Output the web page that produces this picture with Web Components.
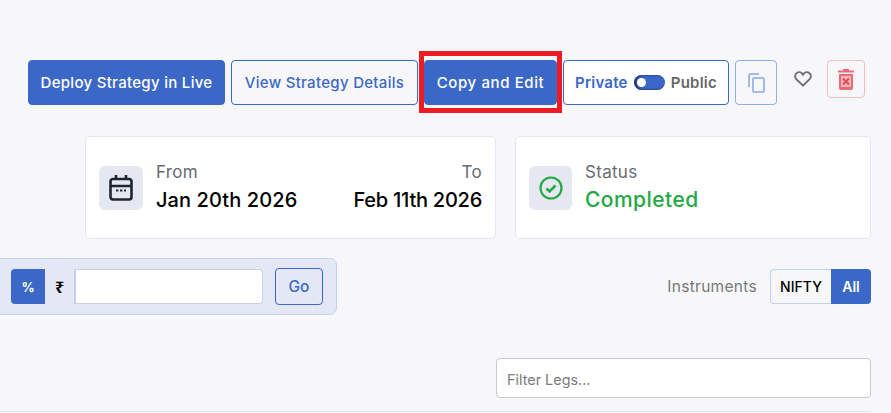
<!DOCTYPE html>
<html>
  <head>
    <meta charset="utf-8" />
    <title>Strategy</title>
    <style>
      html, body { margin: 0; height: 100%; overflow: hidden; }
      body {
        background: #f7f7fa;
        font-family: "Inter", "Noto Sans", sans-serif;
        color: #000;
      }
      strategy-page { width: 891px; height: 413px; }
    </style>

    <template id="strategy-page">
      <style>
        :host { display: block; box-sizing: border-box; padding-top: 60px; position: relative; overflow: hidden; }
        .actions { display: flex; padding-left: 28px; align-items: flex-start; }
        .cards { display: flex; gap: 19px; margin: 31px 20px 0 85px; }
        .tools { display: flex; justify-content: space-between; align-items: flex-start; margin: 19px 20px 0 -21px; }
        .legs { display: flex; justify-content: flex-end; margin: 43px 20px 0 0; }
        hr { border: 0; border-top: 1px solid #dfe3f0; margin: 13px 20px 0 0; }
      </style>
      <div class="actions"><slot name="actions"></slot></div>
      <div class="cards"><slot name="cards"></slot></div>
      <div class="tools"><slot name="tools"></slot></div>
      <div class="legs"><slot name="legs"></slot></div>
      <hr />
    </template>

    <template id="ui-button">
      <style>
        :host { display: block; position: relative; }
        button {
          box-sizing: border-box;
          display: block;
          height: 45px;
          width: var(--w);
          border: 1px solid #3b68c6;
          border-radius: 4px;
          background: #fff0;
          color: #3b68c6;
          font: 500 15px "Inter", "Noto Sans", sans-serif;
          letter-spacing: var(--track, 0.3px);
          padding: 0;
        }
        :host([solid]) button { background: #3b68c6; color: #fff; }
        .mark { display: none; position: absolute; inset: -9px -5px -8px -5px; border: 5px solid #ed1c24; }
        :host([marked]) .mark { display: block; }
      </style>
      <button><slot></slot></button>
      <div class="mark"></div>
    </template>

    <template id="privacy-toggle">
      <style>
        :host {
          display: flex;
          box-sizing: border-box;
          align-items: center;
          justify-content: center;
          gap: 6px;
          width: 166px;
          height: 45px;
          margin-left: 6px;
          border: 1px solid #3b68c6;
          border-radius: 4px;
          background: #fff;
          font-size: 15px;
          font-weight: 600;
          letter-spacing: 0.25px;
        }
        .on { color: #3b68c6; }
        .off { color: #666; }
        .track { width: 31px; height: 15px; border-radius: 8px; background: #3b68c6; position: relative; box-shadow: inset 2px 0 3px #1d2f66; }
        .knob { position: absolute; left: 3px; top: 3px; width: 9px; height: 9px; border-radius: 50%; background: #fff; }
      </style>
      <span class="on">Private</span>
      <span class="track"><span class="knob"></span></span>
      <span class="off">Public</span>
    </template>

    <template id="icon-button">
      <style>
        :host {
          display: flex;
          box-sizing: border-box;
          align-items: center;
          justify-content: center;
          width: var(--w, 42px);
          height: var(--h, 45px);
          margin-left: var(--ml, 6px);
          border: 1px solid var(--line, transparent);
          border-radius: 4px;
        }
      </style>
      <slot></slot>
    </template>

    <template id="info-card">
      <style>
        :host {
          display: flex;
          box-sizing: border-box;
          flex: 0 0 var(--w);
          height: 103px;
          align-items: center;
          gap: 13px;
          padding: 0 13px;
          background: #fff;
          border: 1px solid #e3e6f0;
          border-radius: 5px;
        }
        .tile { flex: none; width: var(--tile, 44px); height: 44px; border-radius: 6px; background: #e5e8f0; display: flex; align-items: center; justify-content: center; }
        .body { flex: 1; }
      </style>
      <div class="tile"><slot name="icon"></slot></div>
      <div class="body"><slot></slot></div>
    </template>

    <template id="date-cell">
      <style>
        :host { display: block; }
        :host([end]) { text-align: right; }
        .label { color: #666b75; font-size: 17px; line-height: 24px; letter-spacing: 0.3px; }
        .value { font-size: 20px; line-height: 30px; font-weight: 500; margin-top: 1px; letter-spacing: var(--track, 0.1px); }
        :host([ok]) .value { color: #23a843; font-size: 21px; letter-spacing: 0.45px; }
      </style>
      <div class="label"><slot name="label"></slot></div>
      <div class="value"><slot></slot></div>
    </template>

    <template id="amount-filter">
      <style>
        :host {
          display: flex;
          box-sizing: border-box;
          align-items: center;
          width: 358px;
          height: 57px;
          padding-left: 31px;
          background: #e4e8f4;
          border: 1px solid #c1d2ee;
          border-radius: 7px;
          font-family: "Inter", "Noto Sans", sans-serif;
        }
        .pct, .inr { height: 35px; box-sizing: border-box; display: flex; align-items: center; justify-content: center; font-size: 13px; font-weight: 700; }
        .pct { width: 34px; background: #3b68c6; color: #fff; border-radius: 4px 0 0 4px; }
        .inr { width: 31px; border-right: 2px solid #c3d0e8; font-family: "Noto Sans", sans-serif; font-size: 16px; }
        input { box-sizing: border-box; width: 187px; height: 35px; border: 1px solid #c9cfdb; border-left: 0; border-radius: 0 4px 4px 0; background: #fff; padding: 0; }
        button { box-sizing: border-box; width: 48px; height: 37px; margin-left: 12px; background: transparent; border: 1px solid #3b68c6; border-radius: 4px; color: #3b68c6; font: 500 15.5px "Inter", sans-serif; padding: 0; }
      </style>
      <span class="pct">%</span><span class="inr">₹</span><input aria-label="Amount" /><button>Go</button>
    </template>

    <template id="instrument-filter">
      <style>
        :host { display: flex; align-items: center; margin-top: 11px; font-size: 14.4px; }
        .label { color: #777; margin-right: 13px; font-size: 15.5px; letter-spacing: 0.3px; }
        .pill { box-sizing: border-box; height: 35px; display: flex; align-items: center; justify-content: center; font-weight: 500; font-size: 14px; }
        .a { width: 61px; border: 1px solid #c3d0ee; border-right: 0; border-radius: 4px 0 0 4px; }
        .b { width: 40px; background: #3b68c6; color: #fff; border-radius: 0 4px 4px 0; font-weight: 600; }
      </style>
      <span class="label">Instruments</span>
      <span class="pill a">NIFTY</span><span class="pill b">All</span>
    </template>

    <template id="legs-search">
      <style>
        :host { display: block; }
        input {
          display: block;
          box-sizing: border-box;
          width: 375px;
          height: 40px;
          padding: 2px 10px 0;
          background: #fff;
          border: 1px solid #c9c9cf;
          border-radius: 4px;
          font: 14.4px "Inter", "Noto Sans", sans-serif;
        }
        input::placeholder { color: #7b7b80; opacity: 1; }
      </style>
      <input placeholder="Filter Legs..." />
    </template>
  </head>

  <body>
    <strategy-page>
      <ui-button slot="actions" solid style="--w: 197px">Deploy Strategy in Live</ui-button>
      <ui-button slot="actions" style="--w: 187px; margin-left: 6px">View Strategy Details</ui-button>
      <ui-button slot="actions" solid marked style="--w: 133px; margin-left: 6px; --track: 0.6px">Copy and Edit</ui-button>
      <privacy-toggle slot="actions"></privacy-toggle>
      <icon-button slot="actions" style="--line: #8eaee8">
        <svg width="17" height="20" viewBox="0 0 17 20" fill="none" stroke="#a3b9e6" stroke-width="2"><path d="M1 14V3a2 2 0 0 1 2-2h8" /><rect x="5" y="5" width="11" height="14" rx="1" /></svg>
      </icon-button>
      <icon-button slot="actions" style="--w: 20px; --h: 38px; --ml: 16px">
        <svg width="18" height="16" viewBox="0 0 18 16" fill="none" stroke="#707070" stroke-width="1.9"><path d="M9 14.6 2.4 8.2C.4 6.2.9 3 3 1.8c2.200-1.200 4.700-.3 6 1.900 1.300-2.200 3.800-3.100 6-1.900 2.100 1.200 2.600 4.400.6 6.400z" /></svg>
      </icon-button>
      <icon-button slot="actions" style="--w: 38px; --h: 38px; --ml: 14px; --line: #f3bcc2">
        <svg width="16" height="21" viewBox="0 0 16 21"><path fill="#e86a76" d="M5 0h6v1.500h5v2H0v-2h5zM1 5h14v14a2 2 0 0 1-2 2H3a2 2 0 0 1-2-2z" /><rect x="3" y="7" width="10" height="11" fill="#f4b5bb" /><path stroke="#e2505e" stroke-width="2.200" d="m5 9.500 6 6m0-6-6 6" /></svg>
      </icon-button>

      <info-card slot="cards" style="--w: 411px">
        <svg slot="icon" width="24" height="26" viewBox="0 0 24 26" fill="none" stroke="#1f2430" stroke-width="2.6"><rect x="1.500" y="4" width="21" height="20.500" rx="2.500" /><path d="M2 11h20M7 0v4M17 0v4" /><path stroke-width="2.200" stroke-dasharray="2.400 1.600" d="M7 15.500h10" /></svg>
        <div style="display: flex; justify-content: space-between">
          <date-cell><span slot="label">From</span>Jan 20th 2026</date-cell>
          <date-cell end style="--track: -0.25px"><span slot="label">To</span>Feb 11th 2026</date-cell>
        </div>
      </info-card>
      <info-card slot="cards" style="--w: 356px; --tile: 43px">
        <svg slot="icon" width="24" height="24" viewBox="0 0 24 24" fill="none" stroke="#23a843" stroke-width="2.200"><circle cx="12" cy="12" r="10.500" /><path stroke-width="2.600" d="m7.500 12.500 3 3 6-6" /></svg>
        <date-cell ok><span slot="label">Status</span>Completed</date-cell>
      </info-card>

      <amount-filter slot="tools"></amount-filter>
      <instrument-filter slot="tools"></instrument-filter>

      <legs-search slot="legs"></legs-search>
    </strategy-page>

    <script>
      // every element just stamps its own template into an open shadow root
      ['strategy-page', 'ui-button', 'privacy-toggle', 'icon-button', 'info-card', 'date-cell', 'amount-filter', 'instrument-filter', 'legs-search'].forEach((name) => {
        customElements.define(
          name,
          class extends HTMLElement {
            constructor() {
              super();
              this.attachShadow({ mode: 'open' });
              this.shadowRoot.appendChild(document.getElementById(name).content.cloneNode(true));
            }
          }
        );
      });
    </script>
  </body>
</html>
